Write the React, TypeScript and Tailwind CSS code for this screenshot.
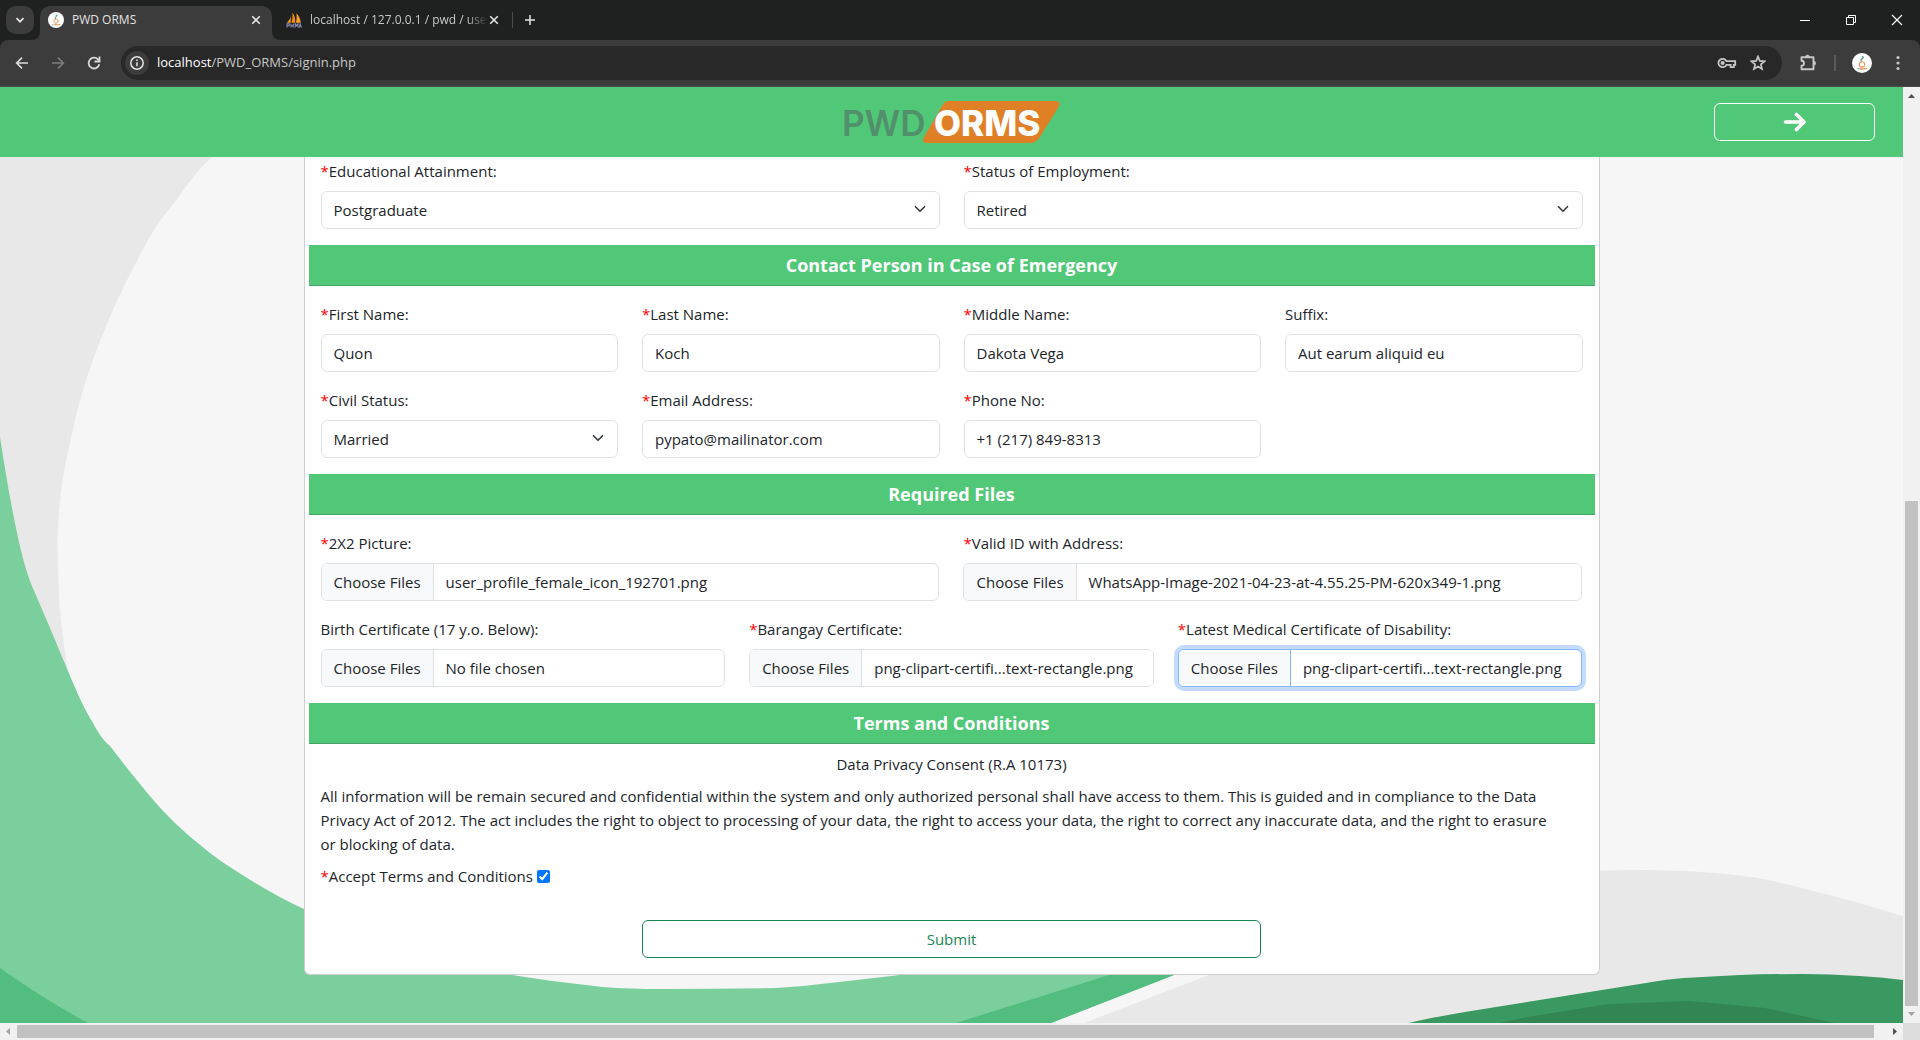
import React from "react";

type FieldProps = {
  id: string;
  label: string;
  required?: boolean;
  span?: string;
  children: React.ReactNode;
};

function Field({ id, label, required, span = "", children }: FieldProps) {
  return (
    <div className={`${span} flex flex-col gap-2 px-3`}>
      <label htmlFor={id}>
        {required && <span className="text-[#ff0000]">*</span>}
        {label}
      </label>
      {children}
    </div>
  );
}

const boxClass =
  "h-[38px] w-full rounded-md border border-[#dee2e6] bg-white px-3 text-[15px] text-[#212529] outline-none";

type InputProps = { id: string; label: string; required?: boolean; span?: string; value: string; type?: string };

function TextField({ id, label, required, span, value, type = "text" }: InputProps) {
  return (
    <Field id={id} label={label} required={required} span={span}>
      <input id={id} type={type} defaultValue={value} className={boxClass} />
    </Field>
  );
}

function SelectField({ id, label, required, span, value }: InputProps) {
  return (
    <Field id={id} label={label} required={required} span={span}>
      <div className="relative">
        <select id={id} defaultValue={value} className={`${boxClass} block appearance-none pr-9`}>
          <option>{value}</option>
        </select>
        <svg
          viewBox="0 0 16 16"
          className="pointer-events-none absolute right-[14px] top-3 h-3 w-3"
          fill="none"
          stroke="#343a40"
          strokeWidth="2.2"
          strokeLinecap="round"
          strokeLinejoin="round"
        >
          <path d="m2 5 6 6 6-6" />
        </svg>
      </div>
    </Field>
  );
}

function FileField({ id, label, required, span, value, focused }: InputProps & { focused?: boolean }) {
  return (
    <Field id={id} label={label} required={required} span={span}>
      <div
        className={`relative flex h-[38px] overflow-hidden rounded-md border bg-white ${
          focused ? "border-[#86b7fe] ring-4 ring-[#c2dbfe]" : "border-[#dee2e6]"
        }`}
      >
        <span
          className={`flex items-center whitespace-nowrap border-r bg-[#f8f9fa] px-3 ${
            focused ? "border-[#86b7fe]" : "border-[#dee2e6]"
          }`}
        >
          Choose Files
        </span>
        <span className="flex items-center whitespace-nowrap pl-3">{value}</span>
        <input id={id} type="file" multiple className="absolute inset-0 cursor-pointer opacity-0" />
      </div>
    </Field>
  );
}

function SectionTitle({ children }: { children: React.ReactNode }) {
  return (
    <h5 className="border-b border-[#42a563] bg-[#50c878] py-2 text-center text-[18px] font-bold leading-6 text-white">
      {children}
    </h5>
  );
}

function WheelchairMark({ className }: { className: string }) {
  return (
    <svg viewBox="0 0 20 20" className={className}>
      <circle cx="10" cy="10" r="10" fill="#fff" />
      <g fill="none" strokeLinecap="round">
        <circle cx="10.6" cy="4" r="0.9" fill="#4f9d86" />
        <path d="M11.400 4.400 9 7l.4 1.600" stroke="#5ba58f" strokeWidth="1.300" />
        <circle cx="10" cy="11.400" r="2.700" stroke="#ef9a5c" strokeWidth="1.100" />
        <path d="M9.800 14.200v1.800" stroke="#ef9a5c" strokeWidth="1" />
        <path d="M5.400 15.900h3.400" stroke="#8dbaa9" strokeWidth="1.100" />
        <path d="M9.200 16.200l5.400-.6" stroke="#ee9350" strokeWidth="1.300" />
      </g>
    </svg>
  );
}

function BoatMark() {
  return (
    <svg viewBox="0 0 16 16" className="h-4 w-4 shrink-0">
      <path d="M4.800 2.600C5 5.400 3.600 8.400.8 10.800h4z" fill="#f89c0e" />
      <path d="M6.200.4c2.600 3 3.400 6.600 3 10.400H5.400C6.400 7.400 6.800 4 6.200.4z" fill="#f08a12" />
      <path d="M10.200 1.200c2.800 2.600 4.200 5.800 4.600 9.600h-5C10.800 7.600 11 4.400 10.200 1.200z" fill="#f5a12c" />
      <path
        d="M1 15.600v-3.800h2.200v2H1M5 15.600v-3.800M5 13.800h2M7.200 11.800v3.800M9.200 15.600v-3.800l1.400 2 1.400-2v3.800M13.400 15.600l.8-3.800 1.200 3.800"
        fill="none"
        stroke="#8c8db8"
        strokeWidth="1.100"
      />
    </svg>
  );
}

function CloseGlyph() {
  return (
    <svg viewBox="0 0 12 12" className="h-3 w-3" stroke="#e3e3e3" strokeWidth="1.600">
      <path d="m2.200 2.200 7.600 7.600M9.800 2.200 2.200 9.800" />
    </svg>
  );
}

function TabStrip() {
  return (
    <div className="flex h-10 items-end bg-[#1f2120] text-[12px] text-[#e3e3e3]">
      <button
        aria-label="Search tabs"
        className="mb-[6px] ml-[6px] flex h-7 w-7 items-center justify-center rounded-[10px] bg-[#3c3c3c]"
      >
        <svg viewBox="0 0 10 10" className="h-[10px] w-[10px]" fill="none" stroke="#e3e3e3" strokeWidth="1.700">
          <path d="m1.500 3.200 3.500 3.500 3.500-3.500" />
        </svg>
      </button>
      <div className="relative ml-[6px] flex h-[34px] w-[232px] items-center rounded-t-[10px] bg-[#3c3c3c] pb-[6px] pl-2 pr-[10px]">
        <svg viewBox="0 0 8 8" className="absolute -left-2 bottom-0 h-2 w-2" fill="#3c3c3c">
          <path d="M8 0v8H0a8 8 0 0 0 8-8z" />
        </svg>
        <svg viewBox="0 0 8 8" className="absolute -right-2 bottom-0 h-2 w-2" fill="#3c3c3c">
          <path d="M0 0v8h8a8 8 0 0 1-8-8z" />
        </svg>
        <WheelchairMark className="h-4 w-4 shrink-0" />
        <span className="flex-1 pl-2">PWD ORMS</span>
        <button aria-label="Close PWD ORMS">
          <CloseGlyph />
        </button>
      </div>
      <div className="flex h-[34px] w-[241px] items-center pb-[6px] pl-[14px] text-[#c7c7c7]">
        <BoatMark />
        <span className="ml-2 flex-1 whitespace-nowrap [mask-image:linear-gradient(to_right,black_88%,transparent)]">
          localhost / 127.0.0.1 / pwd / use
        </span>
        <button aria-label="Close localhost" className="mr-3">
          <CloseGlyph />
        </button>
        <span className="h-4 w-px shrink-0 bg-[#4a4b4a]" />
      </div>
      <button aria-label="New tab" className="mb-[14px] ml-[11px]">
        <svg viewBox="0 0 12 12" className="h-3 w-3" stroke="#e3e3e3" strokeWidth="1.500">
          <path d="M6 1v10M1 6h10" />
        </svg>
      </button>
      <div className="mb-[14px] ml-auto mr-[17px] flex gap-[34px]">
        <button aria-label="Minimize">
          <svg viewBox="0 0 12 12" className="h-3 w-3" stroke="#fff">
            <path d="M1 6.500h10" />
          </svg>
        </button>
        <button aria-label="Restore">
          <svg viewBox="0 0 12 12" className="h-3 w-3" fill="none" stroke="#fff">
            <path d="M1.500 3.500h7v7h-7zM3.500 3.500v-2h7v7h-2" />
          </svg>
        </button>
        <button aria-label="Close window">
          <svg viewBox="0 0 12 12" className="h-3 w-3" stroke="#fff" strokeWidth="1.100">
            <path d="m1 1 10 10M11 1 1 11" />
          </svg>
        </button>
      </div>
    </div>
  );
}

function Toolbar() {
  return (
    <div className="flex h-[47px] items-center rounded-t-lg border-b border-[#4a4a4a] bg-[#3c3c3c] pl-[14px]">
      <div className="flex w-[107px] shrink-0 gap-5">
        <button aria-label="Back">
          <svg viewBox="0 0 16 16" className="h-4 w-4" fill="none" stroke="#dadada" strokeWidth="1.700">
            <path d="M14 8H3M8 2.700 2.700 8 8 13.300" />
          </svg>
        </button>
        <button aria-label="Forward">
          <svg viewBox="0 0 16 16" className="h-4 w-4" fill="none" stroke="#7d7d7d" strokeWidth="1.700">
            <path d="M2 8h11M8 2.700 13.300 8 8 13.300" />
          </svg>
        </button>
        <button aria-label="Reload">
          <svg viewBox="0 0 16 16" className="h-4 w-4" fill="none" stroke="#dadada" strokeWidth="1.800">
            <path d="M13.300 9.200A5.400 5.400 0 1 1 12 4.400l1.200 1.400" />
            <path d="M13.500 1.500v5h-5" />
          </svg>
        </button>
      </div>
      <div className="flex h-[34px] flex-1 items-center rounded-full bg-[#282828] pl-1 pr-4">
        <button
          aria-label="Site information"
          className="flex h-6 w-6 items-center justify-center rounded-full bg-[#3c3c3c]"
        >
          <svg viewBox="0 0 16 16" className="h-4 w-4" fill="none" stroke="#e3e3e3" strokeWidth="1.500">
            <circle cx="8" cy="8" r="6.200" />
            <path d="M8 7.200v4M8 4.600v1.500" />
          </svg>
        </button>
        <span className="flex-1 pl-2 text-[13px] text-[#c7c7c7]">
          <span className="text-white">localhost</span>/PWD_ORMS/signin.php
        </span>
        <button aria-label="Manage passwords" className="mr-[13px]">
          <svg viewBox="0 0 20 12" className="h-3 w-5" fill="none" stroke="#c7c7c7" strokeWidth="1.800">
            <path d="M9.400 4.200h8.800v3.600h-1.400v2.400h-3.200V7.800H9.400a4.200 4.200 0 1 1 0-3.600z" />
            <circle cx="5.600" cy="6" r="1.200" fill="#c7c7c7" />
          </svg>
        </button>
        <button aria-label="Bookmark this tab">
          <svg viewBox="0 0 16 16" className="h-4 w-4" fill="none" stroke="#c7c7c7" strokeWidth="1.700">
            <path d="m8 1.500 1.800 4.400 4.700.4-3.600 3.100 1.100 4.600L8 11.500 4 14l1.100-4.600L1.500 6.300l4.700-.4z" />
          </svg>
        </button>
      </div>
      <div className="flex shrink-0 items-center pl-[17px] pr-[14px]">
        <button aria-label="Extensions">
          <svg
            viewBox="0 0 18 18"
            className="h-[18px] w-[18px]"
            fill="none"
            stroke="#c7c7c7"
            strokeWidth="1.900"
            strokeLinejoin="round"
          >
            <path d="M2.500 3.200h12v12h-12v-3.400a2.400 2.400 0 0 0 0-5z" />
            <path d="M6.500 3a2 2 0 0 1 4 0zM14.700 7.200a2 2 0 0 1 0 4z" fill="#c7c7c7" strokeWidth=".6" />
          </svg>
        </button>
        <span className="ml-[17px] mr-4 h-4 w-0.5 bg-[#5a5a5a]" />
        <button aria-label="Profile">
          <WheelchairMark className="h-5 w-5" />
        </button>
        <button aria-label="Browser menu" className="ml-[18px]">
          <svg viewBox="0 0 16 16" className="h-4 w-4" fill="#c7c7c7">
            <circle cx="8" cy="2.500" r="1.600" />
            <circle cx="8" cy="8" r="1.600" />
            <circle cx="8" cy="13.500" r="1.600" />
          </svg>
        </button>
      </div>
    </div>
  );
}

function Logo() {
  return (
    <svg viewBox="0 0 220 44" className="h-11 w-[220px]" role="img" aria-label="PWD ORMS">
      <path d="M106 1h107q7 0 3.500 6L198 37q-4 6-10 6H85q-6 0-3-6l18-31q3-5 6-5z" fill="#df8027" />
      <text x="0" y="36" fontFamily="Inter, sans-serif" fontWeight="600" fontSize="35" fill="#52906c">
        PWD
      </text>
      <text x="92" y="36" fontFamily="Inter, sans-serif" fontWeight="800" fontSize="35" fill="#fff">
        ORMS
      </text>
    </svg>
  );
}

function Backdrop() {
  return (
    <svg
      viewBox="0 157 1903 866"
      preserveAspectRatio="none"
      className="absolute inset-0 h-full w-full"
      aria-hidden="true"
    >
      <rect y="157" width="1903" height="866" fill="#f6f6f6" />
      <path
        d="M0 157H213C195 170 180 197 167 212 150 232 138 260 127 280 115 304 103 332 93 360 84 384 77 409 72 434 67 456 62 478 60 502 58 521 57 540 58 559 58 580 59 600 61 621 63 638 65 654 68 671L40 700H0z"
        fill="#e8e8e8"
      />
      <path
        d="M1209 975 1400 890C1480 875 1560 870 1646 870C1665 870 1684 871 1702 872C1720 873 1736 875 1752 877C1770 880 1786 884 1802 888L1852 901 1903 916V1023H1084z"
        fill="#e8e8e8"
      />
      <path
        d="M0 437C4 463 8 488 13 513 19 545 26 574 35 593L47 621 68 671C77 693 85 710 93 723 98 733 104 741 110 746 120 759 130 772 140 784 155 803 171 820 187 834 202 847 217 859 233 869 256 884 280 898 304 909 370 940 440 962 512 975L552 981 603 987Q630 989 662 989 720 989 776 988 808 986 839 982L900 975 1174 960V975L1051 1023H0z"
        fill="#7acf9d"
      />
      <path d="M0 968Q45 1000 88 1023H0z" fill="#52bd7f" />
      <path d="M956 1023 1109 975H1174L1051 1023z" fill="#52bd7f" />
      <path
        d="M1409 1023C1425 1019 1442 1016 1459 1013L1502 1006 1602 990 1646 983Q1668 979 1684 978L1740 975Q1770 974 1802 974 1830 974 1859 976 1880 977 1903 980V1023z"
        fill="#3a9961"
      />
      <path d="M1499 1023 1527 1017 1609 1004 1690 1001 1765 1008 1835 1023z" fill="#328653" />
    </svg>
  );
}

function VerticalScrollbar() {
  return (
    <div className="flex w-[17px] shrink-0 flex-col items-center bg-[#f1f1f1]" aria-hidden="true">
      <svg viewBox="0 0 17 17" className="h-[17px] w-[17px] shrink-0" fill="#505050">
        <path d="M5 11h7L8.500 7z" />
      </svg>
      <div className="flex w-[13px] flex-1 flex-col justify-end">
        <div className="h-[56%] bg-[#c1c1c1]" />
      </div>
      <svg viewBox="0 0 17 17" className="h-[17px] w-[17px] shrink-0" fill="#a3a3a3">
        <path d="M5 6h7l-3.500 4z" />
      </svg>
    </div>
  );
}

function HorizontalScrollbar() {
  return (
    <div className="flex h-[17px] shrink-0 items-center bg-[#f1f1f1]" aria-hidden="true">
      <svg viewBox="0 0 17 17" className="h-[17px] w-[17px] shrink-0" fill="#a3a3a3">
        <path d="M10 5v7L6 8.500z" />
      </svg>
      <div className="mr-3 h-[13px] flex-1 bg-[#c1c1c1]" />
      <svg viewBox="0 0 17 17" className="h-[17px] w-[17px] shrink-0" fill="#505050">
        <path d="M7 5v7l4-3.500z" />
      </svg>
      <div className="h-[17px] w-[17px] shrink-0 bg-[#dcdcdc]" />
    </div>
  );
}

function RegistrationForm() {
  return (
    <form
      className="relative mx-auto w-full max-w-[1296px] rounded-b-md border border-t-0 border-[#cfcfcf] bg-white px-1 pb-4 pt-0.5"
      onSubmit={(e) => e.preventDefault()}
    >
      <div className="mb-4 grid grid-cols-2">
        <SelectField id="education" label="Educational Attainment:" required value="Postgraduate" />
        <SelectField id="employment" label="Status of Employment:" required value="Retired" />
      </div>

      <SectionTitle>Contact Person in Case of Emergency</SectionTitle>
      <div className="grid grid-cols-4 gap-y-4 py-4">
        <TextField id="first-name" label="First Name:" required value="Quon" />
        <TextField id="last-name" label="Last Name:" required value="Koch" />
        <TextField id="middle-name" label="Middle Name:" required value="Dakota Vega" />
        <TextField id="suffix" label="Suffix:" value="Aut earum aliquid eu" />
        <SelectField id="civil-status" label="Civil Status:" required value="Married" />
        <TextField id="email" label="Email Address:" required value="pypato@mailinator.com" type="email" />
        <TextField id="phone" label="Phone No:" required value="+1 (217) 849-8313" type="tel" />
      </div>

      <SectionTitle>Required Files</SectionTitle>
      <div className="grid grid-cols-6 gap-y-4 py-4">
        <FileField
          id="picture"
          label="2X2 Picture:"
          required
          span="col-span-3"
          value="user_profile_female_icon_192701.png"
        />
        <FileField
          id="valid-id"
          label="Valid ID with Address:"
          required
          span="col-span-3"
          value="WhatsApp-Image-2021-04-23-at-4.55.25-PM-620x349-1.png"
        />
        <FileField id="birth" label="Birth Certificate (17 y.o. Below):" span="col-span-2" value="No file chosen" />
        <FileField
          id="barangay"
          label="Barangay Certificate:"
          required
          span="col-span-2"
          value="png-clipart-certifi...text-rectangle.png"
        />
        <FileField
          id="medical"
          label="Latest Medical Certificate of Disability:"
          required
          focused
          span="col-span-2"
          value="png-clipart-certifi...text-rectangle.png"
        />
      </div>

      <SectionTitle>Terms and Conditions</SectionTitle>
      <div className="flex flex-col gap-2 px-3 pt-2">
        <p className="text-center">Data Privacy Consent (R.A 10173)</p>
        <p>
          All information will be remain secured and confidential within the system and only authorized personal shall
          have access to them. This is guided and in compliance to the Data Privacy Act of 2012. The act includes the
          right to object to processing of your data, the right to access your data, the right to correct any inaccurate
          data, and the right to erasure or&nbsp;blocking of data.
        </p>
        <div className="flex items-center gap-1">
          <label htmlFor="accept">
            <span className="text-[#ff0000]">*</span>Accept Terms and Conditions
          </label>
          <input id="accept" type="checkbox" defaultChecked className="h-[13px] w-[13px] accent-[#0075ff]" />
        </div>
      </div>

      <div className="mt-8 grid grid-cols-4">
        <div className="col-span-2 col-start-2 px-3">
          <button type="submit" className="h-[38px] w-full rounded-md border border-[#198754] text-[#198754]">
            Submit
          </button>
        </div>
      </div>
    </form>
  );
}

export default function App() {
  return (
    <div className="flex h-screen flex-col overflow-hidden bg-[#1f2120] font-['Open_Sans',sans-serif]">
      <TabStrip />
      <Toolbar />
      <div className="flex min-h-0 flex-1">
        <div className="flex min-w-0 flex-1 flex-col">
          <header className="grid h-[70px] shrink-0 grid-cols-[1fr_auto_1fr] items-center bg-[#50c878] px-7">
            <span />
            <Logo />
            <button
              aria-label="Continue"
              className="flex h-[38px] w-[161px] items-center justify-center justify-self-end rounded-md border border-white"
            >
              <svg
                viewBox="0 0 24 20"
                className="h-5 w-6"
                fill="none"
                stroke="#fff"
                strokeWidth="3.600"
                strokeLinecap="round"
                strokeLinejoin="round"
              >
                <path d="M2.500 10h18M13.500 2.500 21 10l-7.500 7.500" />
              </svg>
            </button>
          </header>
          <main className="relative flex-1 overflow-hidden text-[15px] leading-6 text-[#212529]">
            <Backdrop />
            <RegistrationForm />
          </main>
        </div>
        <VerticalScrollbar />
      </div>
      <HorizontalScrollbar />
    </div>
  );
}
